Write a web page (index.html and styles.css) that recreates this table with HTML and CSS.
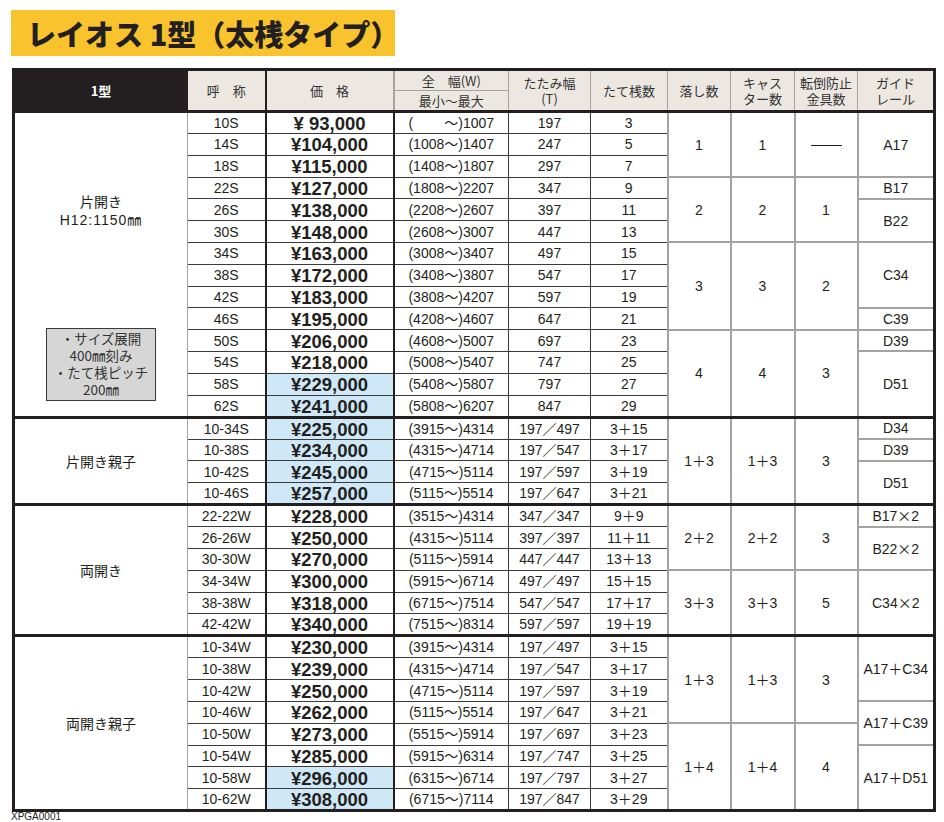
FILE: index.html
```html
<!DOCTYPE html>
<html lang="ja">
<head>
<meta charset="utf-8">
<title>レイオス 1型(太桟タイプ)</title>
<link rel="stylesheet" href="styles.css">
</head>
<body>
<div class="page">
  <h1 class="title">レイオス 1型（太桟タイプ）</h1>
  <table class="spec">
    <colgroup>
      <col class="w-type"><col class="w-name"><col class="w-price"><col class="w-wide"><col class="w-fold"><col class="w-bar"><col class="w-drop"><col class="w-cast"><col class="w-stop"><col class="w-guide">
    </colgroup>
    <thead>
      <tr class="h1">
        <th rowspan="2" class="c-type hd-black">1型</th>
        <th rowspan="2" class="c-name">呼　称</th>
        <th rowspan="2" class="c-price">価　格</th>
        <th class="c-wide hd-sub">全　幅(W)</th>
        <th rowspan="2" class="c-fold"><div class="two">たたみ幅<br>(T)</div></th>
        <th rowspan="2" class="c-bar">たて桟数</th>
        <th rowspan="2" class="c-drop">落し数</th>
        <th rowspan="2" class="c-cast"><div class="two">キャス<br>ター数</div></th>
        <th rowspan="2" class="c-stop"><div class="two">転倒防止<br>金具数</div></th>
        <th rowspan="2" class="c-guide"><div class="two">ガイド<br>レール</div></th>
      </tr>
      <tr class="h2">
        <th class="c-wide">最小〜最大</th>
      </tr>
    </thead>
    <tbody class="grp">
      <tr><td rowspan="9" class="c-type split-top"><div class="label">片開き<br><span class="sub">H12:1150㎜</span></div></td><td class="c-name">10S</td><td class="c-price">¥ 93,000</td><td class="c-wide">(<span class="ghost">1008</span>〜)1007</td><td class="c-fold">197</td><td class="c-bar">3</td><td rowspan="3" class="c-drop">1</td><td rowspan="3" class="c-cast">1</td><td rowspan="3" class="c-stop"><span class="dash"></span></td><td rowspan="3" class="c-guide">A17</td></tr>
      <tr><td class="c-name">14S</td><td class="c-price">¥104,000</td><td class="c-wide">(1008〜)1407</td><td class="c-fold">247</td><td class="c-bar">5</td></tr>
      <tr><td class="c-name">18S</td><td class="c-price">¥115,000</td><td class="c-wide">(1408〜)1807</td><td class="c-fold">297</td><td class="c-bar">7</td></tr>
      <tr><td class="c-name">22S</td><td class="c-price">¥127,000</td><td class="c-wide">(1808〜)2207</td><td class="c-fold">347</td><td class="c-bar">9</td><td rowspan="3" class="c-drop">2</td><td rowspan="3" class="c-cast">2</td><td rowspan="3" class="c-stop">1</td><td class="c-guide">B17</td></tr>
      <tr><td class="c-name">26S</td><td class="c-price">¥138,000</td><td class="c-wide">(2208〜)2607</td><td class="c-fold">397</td><td class="c-bar">11</td><td rowspan="2" class="c-guide">B22</td></tr>
      <tr><td class="c-name">30S</td><td class="c-price">¥148,000</td><td class="c-wide">(2608〜)3007</td><td class="c-fold">447</td><td class="c-bar">13</td></tr>
      <tr><td class="c-name">34S</td><td class="c-price">¥163,000</td><td class="c-wide">(3008〜)3407</td><td class="c-fold">497</td><td class="c-bar">15</td><td rowspan="4" class="c-drop">3</td><td rowspan="4" class="c-cast">3</td><td rowspan="4" class="c-stop">2</td><td rowspan="3" class="c-guide">C34</td></tr>
      <tr><td class="c-name">38S</td><td class="c-price">¥172,000</td><td class="c-wide">(3408〜)3807</td><td class="c-fold">547</td><td class="c-bar">17</td></tr>
      <tr><td class="c-name">42S</td><td class="c-price">¥183,000</td><td class="c-wide">(3808〜)4207</td><td class="c-fold">597</td><td class="c-bar">19</td></tr>
      <tr><td rowspan="5" class="c-type split-bottom"><div class="note">・サイズ展開<br>400㎜刻み<br>・たて桟ピッチ<br>200㎜</div></td><td class="c-name">46S</td><td class="c-price">¥195,000</td><td class="c-wide">(4208〜)4607</td><td class="c-fold">647</td><td class="c-bar">21</td><td class="c-guide">C39</td></tr>
      <tr><td class="c-name">50S</td><td class="c-price">¥206,000</td><td class="c-wide">(4608〜)5007</td><td class="c-fold">697</td><td class="c-bar">23</td><td rowspan="4" class="c-drop">4</td><td rowspan="4" class="c-cast">4</td><td rowspan="4" class="c-stop">3</td><td class="c-guide">D39</td></tr>
      <tr><td class="c-name">54S</td><td class="c-price">¥218,000</td><td class="c-wide">(5008〜)5407</td><td class="c-fold">747</td><td class="c-bar">25</td><td rowspan="3" class="c-guide">D51</td></tr>
      <tr><td class="c-name">58S</td><td class="c-price hl">¥229,000</td><td class="c-wide">(5408〜)5807</td><td class="c-fold">797</td><td class="c-bar">27</td></tr>
      <tr><td class="c-name">62S</td><td class="c-price hl">¥241,000</td><td class="c-wide">(5808〜)6207</td><td class="c-fold">847</td><td class="c-bar">29</td></tr>
    </tbody>
    <tbody class="grp">
      <tr><td rowspan="4" class="c-type"><div class="label">片開き親子</div></td><td class="c-name">10-34S</td><td class="c-price hl">¥225,000</td><td class="c-wide">(3915〜)4314</td><td class="c-fold">197／497</td><td class="c-bar">3＋15</td><td rowspan="4" class="c-drop">1＋3</td><td rowspan="4" class="c-cast">1＋3</td><td rowspan="4" class="c-stop">3</td><td class="c-guide">D34</td></tr>
      <tr><td class="c-name">10-38S</td><td class="c-price hl">¥234,000</td><td class="c-wide">(4315〜)4714</td><td class="c-fold">197／547</td><td class="c-bar">3＋17</td><td class="c-guide">D39</td></tr>
      <tr><td class="c-name">10-42S</td><td class="c-price hl">¥245,000</td><td class="c-wide">(4715〜)5114</td><td class="c-fold">197／597</td><td class="c-bar">3＋19</td><td rowspan="2" class="c-guide">D51</td></tr>
      <tr><td class="c-name">10-46S</td><td class="c-price hl">¥257,000</td><td class="c-wide">(5115〜)5514</td><td class="c-fold">197／647</td><td class="c-bar">3＋21</td></tr>
    </tbody>
    <tbody class="grp">
      <tr><td rowspan="6" class="c-type"><div class="label">両開き</div></td><td class="c-name">22-22W</td><td class="c-price">¥228,000</td><td class="c-wide">(3515〜)4314</td><td class="c-fold">347／347</td><td class="c-bar">9＋9</td><td rowspan="3" class="c-drop">2＋2</td><td rowspan="3" class="c-cast">2＋2</td><td rowspan="3" class="c-stop">3</td><td class="c-guide">B17<span class="cjk">×</span>2</td></tr>
      <tr><td class="c-name">26-26W</td><td class="c-price">¥250,000</td><td class="c-wide">(4315〜)5114</td><td class="c-fold">397／397</td><td class="c-bar">11＋11</td><td rowspan="2" class="c-guide">B22<span class="cjk">×</span>2</td></tr>
      <tr><td class="c-name">30-30W</td><td class="c-price">¥270,000</td><td class="c-wide">(5115〜)5914</td><td class="c-fold">447／447</td><td class="c-bar">13＋13</td></tr>
      <tr><td class="c-name">34-34W</td><td class="c-price">¥300,000</td><td class="c-wide">(5915〜)6714</td><td class="c-fold">497／497</td><td class="c-bar">15＋15</td><td rowspan="3" class="c-drop">3＋3</td><td rowspan="3" class="c-cast">3＋3</td><td rowspan="3" class="c-stop">5</td><td rowspan="3" class="c-guide">C34<span class="cjk">×</span>2</td></tr>
      <tr><td class="c-name">38-38W</td><td class="c-price">¥318,000</td><td class="c-wide">(6715〜)7514</td><td class="c-fold">547／547</td><td class="c-bar">17＋17</td></tr>
      <tr><td class="c-name">42-42W</td><td class="c-price">¥340,000</td><td class="c-wide">(7515〜)8314</td><td class="c-fold">597／597</td><td class="c-bar">19＋19</td></tr>
    </tbody>
    <tbody class="grp">
      <tr><td rowspan="8" class="c-type"><div class="label">両開き親子</div></td><td class="c-name">10-34W</td><td class="c-price">¥230,000</td><td class="c-wide">(3915〜)4314</td><td class="c-fold">197／497</td><td class="c-bar">3＋15</td><td rowspan="4" class="c-drop">1＋3</td><td rowspan="4" class="c-cast">1＋3</td><td rowspan="4" class="c-stop">3</td><td rowspan="3" class="c-guide">A17＋C34</td></tr>
      <tr><td class="c-name">10-38W</td><td class="c-price">¥239,000</td><td class="c-wide">(4315〜)4714</td><td class="c-fold">197／547</td><td class="c-bar">3＋17</td></tr>
      <tr><td class="c-name">10-42W</td><td class="c-price">¥250,000</td><td class="c-wide">(4715〜)5114</td><td class="c-fold">197／597</td><td class="c-bar">3＋19</td></tr>
      <tr><td class="c-name">10-46W</td><td class="c-price">¥262,000</td><td class="c-wide">(5115〜)5514</td><td class="c-fold">197／647</td><td class="c-bar">3＋21</td><td rowspan="2" class="c-guide">A17＋C39</td></tr>
      <tr><td class="c-name">10-50W</td><td class="c-price">¥273,000</td><td class="c-wide">(5515〜)5914</td><td class="c-fold">197／697</td><td class="c-bar">3＋23</td><td rowspan="4" class="c-drop">1＋4</td><td rowspan="4" class="c-cast">1＋4</td><td rowspan="4" class="c-stop">4</td></tr>
      <tr><td class="c-name">10-54W</td><td class="c-price">¥285,000</td><td class="c-wide">(5915〜)6314</td><td class="c-fold">197／747</td><td class="c-bar">3＋25</td><td rowspan="3" class="c-guide">A17＋D51</td></tr>
      <tr><td class="c-name">10-58W</td><td class="c-price hl">¥296,000</td><td class="c-wide">(6315〜)6714</td><td class="c-fold">197／797</td><td class="c-bar">3＋27</td></tr>
      <tr><td class="c-name">10-62W</td><td class="c-price hl">¥308,000</td><td class="c-wide">(6715〜)7114</td><td class="c-fold">197／847</td><td class="c-bar">3＋29</td></tr>
    </tbody>
  </table>
  <div class="code">XPGA0001</div>
</div>
</body>
</html>
```

FILE: styles.css
```css
html, body {
  margin: 0;
  padding: 0;
  background: #ffffff;
}

body {
  font-family: "Liberation Sans", "Noto Sans CJK JP", sans-serif;
  color: #231f20;
}

.page {
  padding: 10px 0 0 11px;
}

.title {
  margin: 0;
  width: 384px;
  height: 46px;
  box-sizing: border-box;
  padding-left: 16px;
  display: flex;
  align-items: center;
  background: #f9c32e;
  font-family: "Noto Sans CJK JP", sans-serif;
  font-weight: 900;
  font-size: 29px;
  line-height: 1;
  white-space: nowrap;
  color: #231f20;
}

.spec {
  margin-top: 12px;
  margin-left: 1px;
  border-collapse: collapse;
  table-layout: fixed;
  width: 921px;
  border: 3px solid #231f20;
}

.w-type { width: 174px; }
.w-name { width: 78px; }
.w-price { width: 128px; }
.w-wide { width: 115px; }
.w-fold { width: 82px; }
.w-bar { width: 77px; }
.w-drop { width: 63px; }
.w-cast { width: 64px; }
.w-stop { width: 63px; }
.w-guide { width: 77px; }

th, td {
  padding: 0;
  text-align: center;
  vertical-align: middle;
  white-space: nowrap;
}

/* header */
thead th {
  background: #ece8e1;
  font-family: "Noto Sans CJK JP", sans-serif;
  font-weight: 400;
  font-size: 13px;
  line-height: 17px;
  color: #333333;
  border: 1px solid #a3a3a3;
  border-top: 3px solid #231f20;
  border-bottom: 2px solid #231f20;
}

thead th .two {
  line-height: 16px;
  padding-top: 1px;
}

thead tr.h1 { height: 21px; }
thead tr.h2 { height: 21px; }

thead th.hd-sub {
  border-bottom: 1px solid #a3a3a3;
}

thead tr.h2 th {
  border-top: 1px solid #a3a3a3;
}

thead th.hd-black {
  background: #231f20;
  color: #ffffff;
  font-weight: 700;
  font-size: 13px;
  border-right: 1px solid #231f20;
}

thead th.c-name {
  border-right: 2px solid #231f20;
}

thead th.c-price {
  border-right: 2px solid #a3a3a3;
}

/* body */
tbody tr {
  height: 21.8px;
}

tbody td {
  font-size: 14px;
  line-height: 16px;
  border-top: 1px solid #3a3a3a;
  border-bottom: 1px solid #3a3a3a;
  border-left: 1px solid #3a3a3a;
  border-right: 1px solid #3a3a3a;
}

tbody.grp tr:first-child td {
  border-top: 3px solid #231f20;
}

tbody td.c-type {
  border-right: 1px solid #a3a3a3;
  font-family: "Noto Sans CJK JP", sans-serif;
  font-size: 14px;
  line-height: 18px;
}

tbody td.split-top {
  border-bottom: none;
}

tbody td.split-bottom {
  border-top: none;
}

.label .sub {
  font-family: "Liberation Sans", "Noto Sans CJK JP", sans-serif;
  font-size: 14px;
  letter-spacing: 1px;
}

.note {
  width: 108px;
  margin-left: 31px;
  margin-top: 6px;
  padding: 1px 0 2px;
  background: #d6d6d6;
  border: 1px solid #3a3a3a;
  font-family: "Noto Sans CJK JP", sans-serif;
  font-size: 13.5px;
  line-height: 17px;
  color: #333333;
}

tbody td.c-name {
  border-right: 2px solid #231f20;
}

tbody td.c-price {
  border-right: 2px solid #231f20;
  font-weight: 700;
  font-size: 18.5px;
  line-height: 18px;
  padding-top: 2px;
}

tbody td.c-price.hl {
  background: #cfe8f7;
}

tbody td.c-bar {
  border-right: 2px solid #a3a3a3;
}

tbody td.c-drop,
tbody td.c-cast,
tbody td.c-stop,
tbody td.c-guide {
  border: 2px solid #a3a3a3;
}

tbody td.c-guide {
  border-right: 3px solid #231f20;
}

tbody.grp tr:first-child td.c-drop,
tbody.grp tr:first-child td.c-cast,
tbody.grp tr:first-child td.c-stop,
tbody.grp tr:first-child td.c-guide {
  border-top: 3px solid #231f20;
}

.cjk {
  font-family: "Noto Sans CJK JP", sans-serif;
}

.ghost {
  visibility: hidden;
}

.dash {
  display: inline-block;
  width: 31px;
  height: 1px;
  background: #231f20;
  vertical-align: middle;
}

.code {
  font-family: "Liberation Sans", sans-serif;
  font-size: 10px;
  line-height: 12px;
  color: #231f20;
  margin-top: -1px;
}
```
